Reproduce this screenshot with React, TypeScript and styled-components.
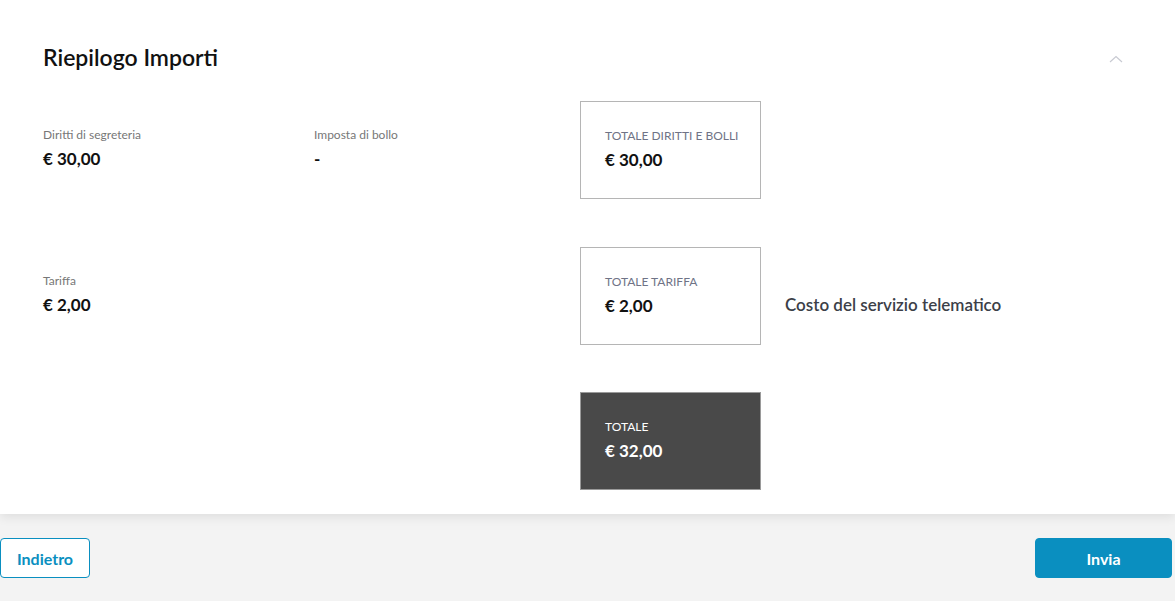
import React from "react";
import styled, { createGlobalStyle } from "styled-components";

const Global = createGlobalStyle`
  html, body { margin: 0; padding: 0; background: #f3f3f3; }
  body { font-family: "Lato", "Noto Sans", sans-serif; color: #1a1a1a; }
  * { box-sizing: border-box; }
`;

const Page = styled.div`
  min-height: 601px;
  display: flex;
  flex-direction: column;
  background: #f3f3f3;
`;

const Card = styled.section`
  background: #ffffff;
  padding: 40px 52px 24px 43px;
  box-shadow: 0 3px 10px rgba(0, 0, 0, 0.09);
  position: relative;
  z-index: 1;
`;

const Header = styled.div`
  display: flex;
  align-items: center;
  justify-content: space-between;
  height: 34px;
  margin-bottom: 27px;
`;

const Title = styled.h2`
  margin: 0;
  font-size: 23px;
  font-weight: 600;
  line-height: 34px;
  color: #111;
`;

const Chevron = styled.svg`
  width: 14px;
  height: 8px;
  margin-top: 4px;
`;

const Rows = styled.div`
  display: flex;
  flex-direction: column;
  gap: 47.5px;
`;

const Row = styled.div`
  display: grid;
  grid-template-columns: 271px 266px 181px auto;
  align-items: start;
`;

type Variant = "plain" | "outlined" | "dark";

const Cell = styled.div<{ $variant?: Variant }>`
  height: 98px;
  padding: 25px 0 0 ${(p) => (p.$variant && p.$variant !== "plain" ? "24px" : "0")};
  border: ${(p) =>
    p.$variant === "outlined"
      ? "1px solid #b5b5b5"
      : p.$variant === "dark"
      ? "1px solid #9a9a9a"
      : "none"};
  background: ${(p) => (p.$variant === "dark" ? "#494949" : "transparent")};
`;

const Label = styled.div<{ $variant?: Variant }>`
  font-size: 12px;
  line-height: 18px;
  font-weight: 400;
  color: ${(p) =>
    p.$variant === "dark" ? "#ffffff" : p.$variant === "outlined" ? "#6f7386" : "#777777"};
  text-transform: ${(p) => (p.$variant && p.$variant !== "plain" ? "uppercase" : "none")};
  margin-bottom: 4px;
`;

const Value = styled.div<{ $variant?: Variant }>`
  font-size: 17px;
  line-height: 22px;
  font-weight: 700;
  color: ${(p) => (p.$variant === "dark" ? "#ffffff" : "#111111")};
`;

const Note = styled.div`
  padding: 47px 0 0 24px;
  font-size: 17px;
  line-height: 22px;
  font-weight: 600;
  color: #3c3f48;
`;

const Footer = styled.footer`
  display: flex;
  justify-content: space-between;
  align-items: flex-start;
  padding: 24px 3px 0 0;
`;

const Button = styled.button<{ $primary?: boolean }>`
  height: 40px;
  width: ${(p) => (p.$primary ? "137px" : "90px")};
  border-radius: 4px;
  border: 1px solid #0a8fc0;
  background: ${(p) => (p.$primary ? "#0a8fc0" : "#ffffff")};
  color: ${(p) => (p.$primary ? "#ffffff" : "#0a8fc0")};
  font-family: "Lato", "Noto Sans", sans-serif;
  font-size: 16px;
  font-weight: 700;
  cursor: pointer;
`;

type Item = { label: string; value: string };

const rows: { left?: Item; mid?: Item; box: Item; variant: Variant; note?: string }[] = [
  {
    left: { label: "Diritti di segreteria", value: "€ 30,00" },
    mid: { label: "Imposta di bollo", value: "-" },
    box: { label: "Totale diritti e bolli", value: "€ 30,00" },
    variant: "outlined",
  },
  {
    left: { label: "Tariffa", value: "€ 2,00" },
    box: { label: "Totale tariffa", value: "€ 2,00" },
    variant: "outlined",
    note: "Costo del servizio telematico",
  },
  {
    box: { label: "Totale", value: "€ 32,00" },
    variant: "dark",
  },
];

const Field = ({ item, variant = "plain" }: { item?: Item; variant?: Variant }) => (
  <Cell $variant={variant}>
    {item && (
      <>
        <Label $variant={variant}>{item.label}</Label>
        <Value $variant={variant}>{item.value}</Value>
      </>
    )}
  </Cell>
);

export default function App() {
  return (
    <Page>
      <Global />
      <Card>
        <Header>
          <Title>Riepilogo Importi</Title>
          <Chevron viewBox="0 0 14 8" fill="none">
            <path d="M1 7 L7 1.5 L13 7" stroke="#c8cad2" strokeWidth="1.2" />
          </Chevron>
        </Header>
        <Rows>
          {rows.map((r, i) => (
            <Row key={i}>
              <Field item={r.left} />
              <Field item={r.mid} />
              <Field item={r.box} variant={r.variant} />
              {r.note ? <Note>{r.note}</Note> : <div />}
            </Row>
          ))}
        </Rows>
      </Card>
      <Footer>
        <Button>Indietro</Button>
        <Button $primary>Invia</Button>
      </Footer>
    </Page>
  );
}
